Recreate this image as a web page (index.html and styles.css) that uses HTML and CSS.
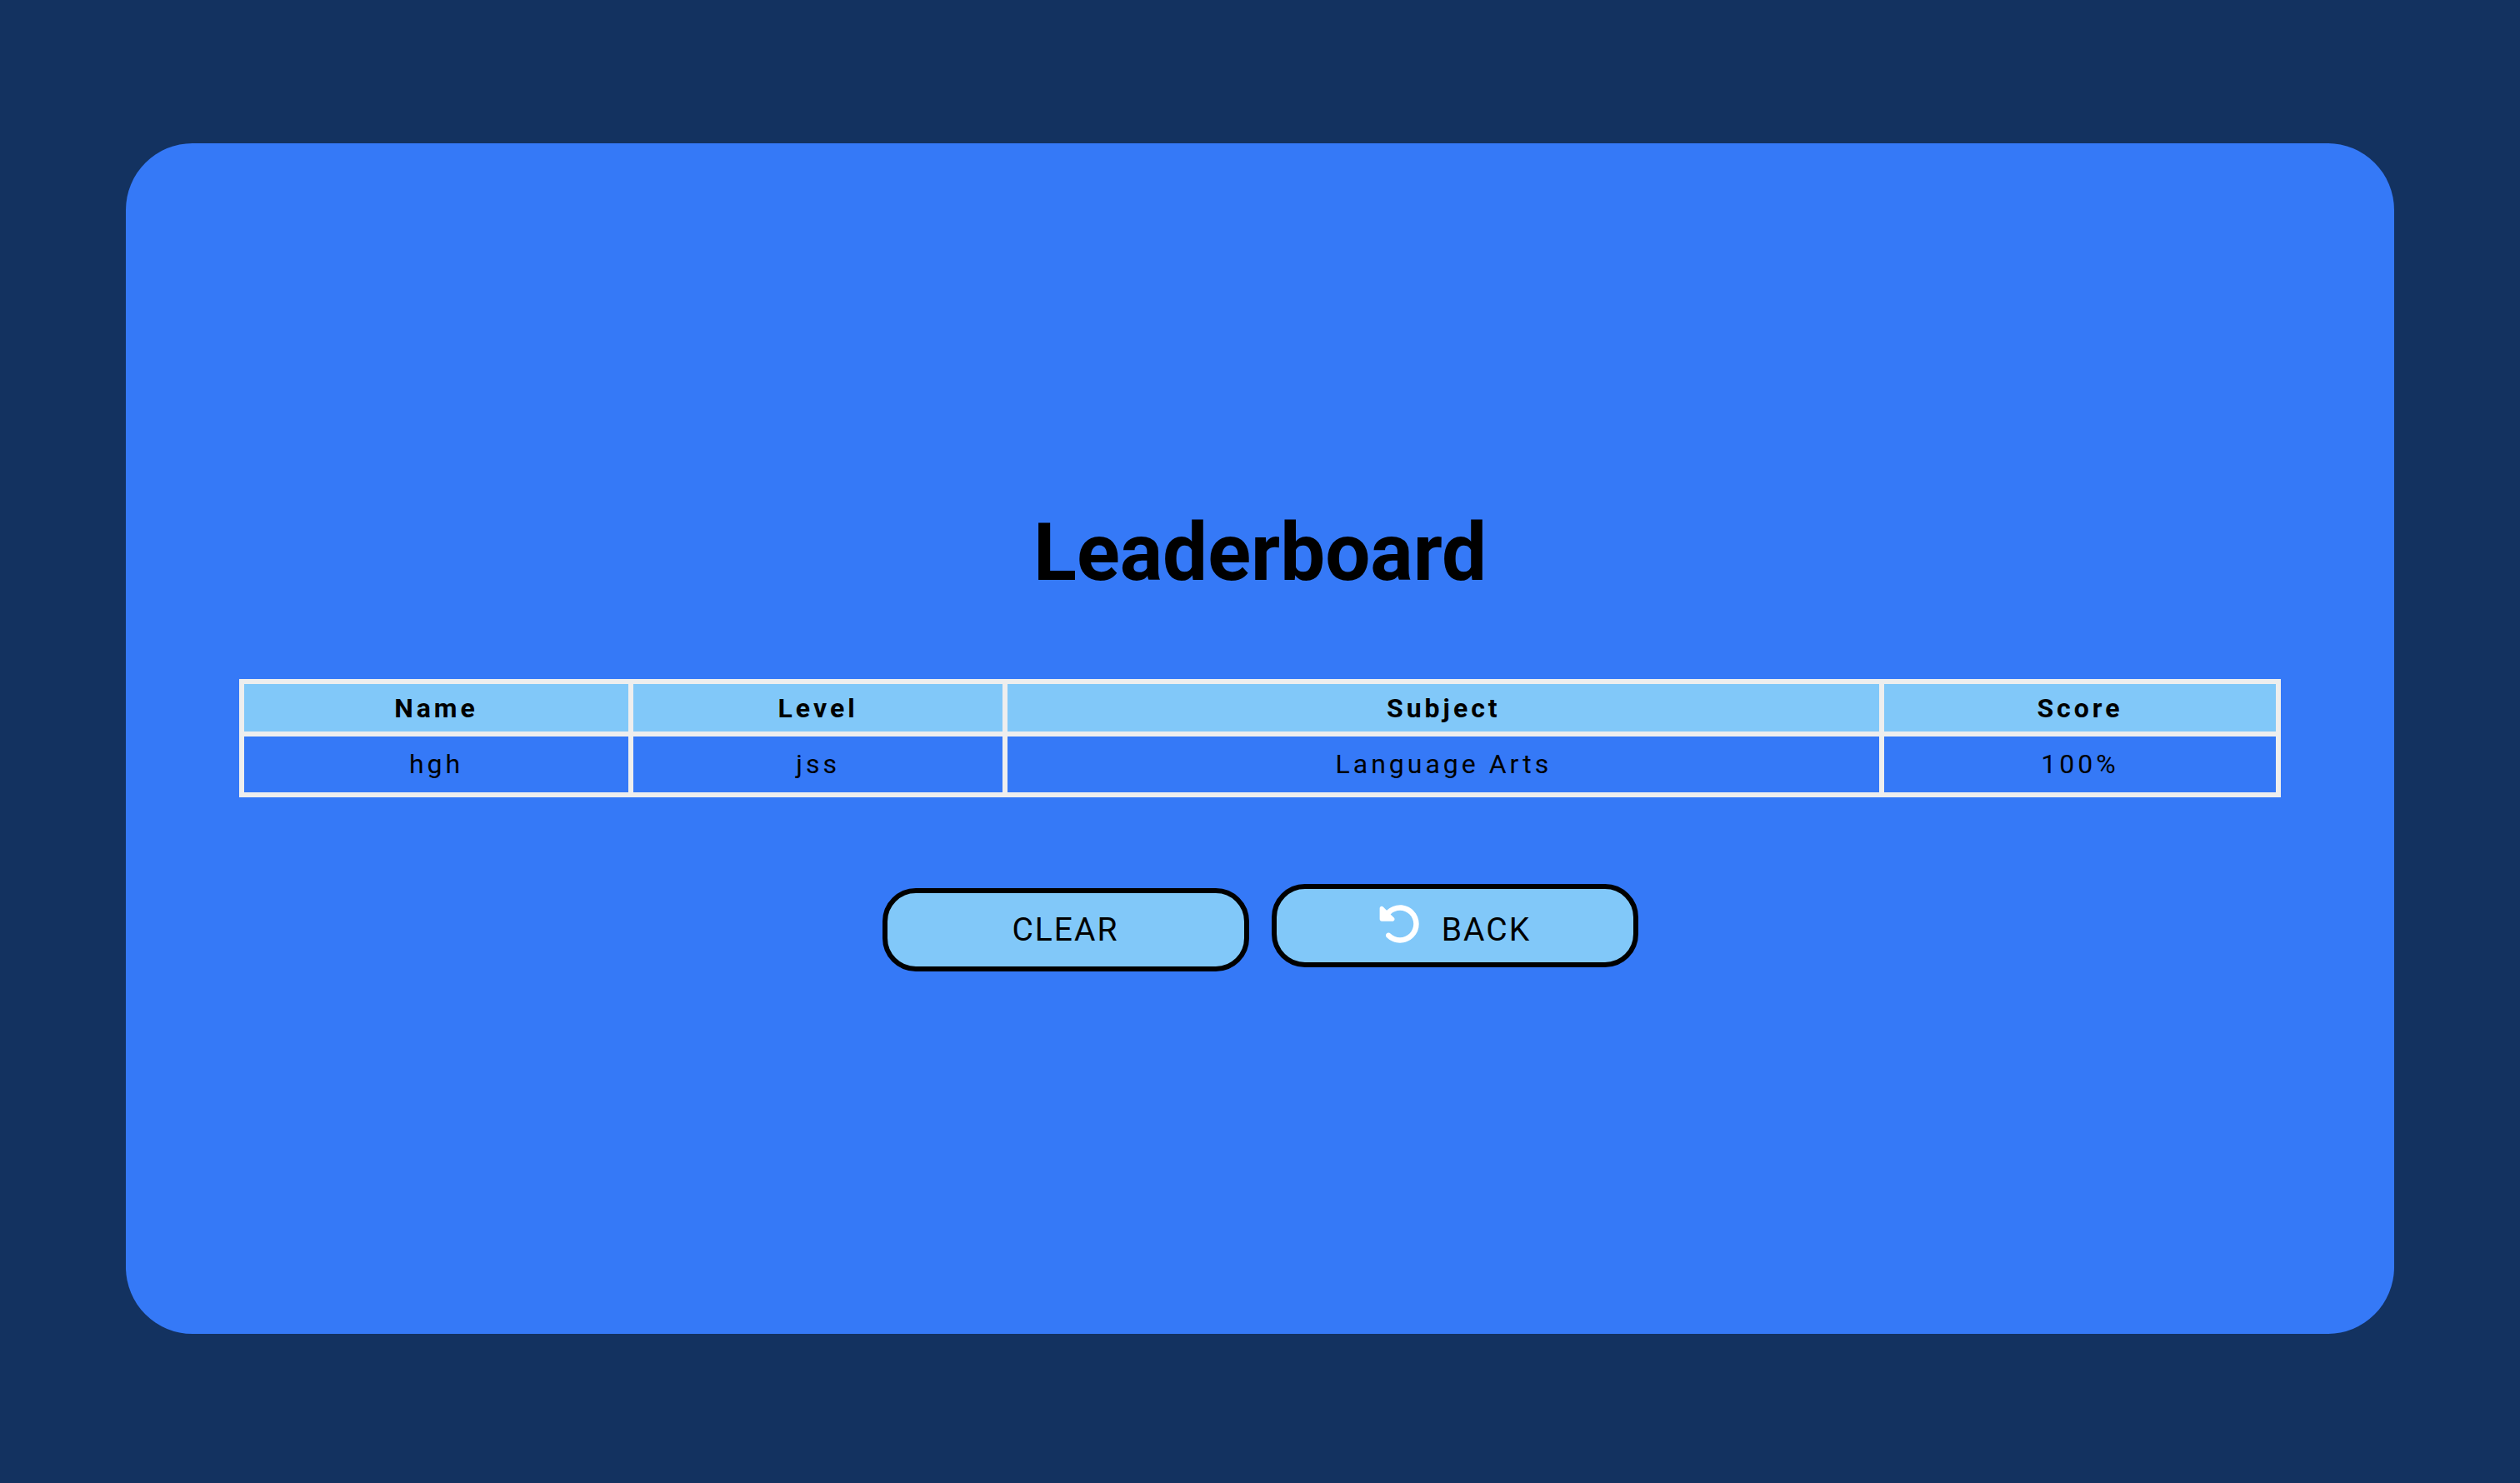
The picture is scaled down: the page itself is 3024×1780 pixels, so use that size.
FILE: index.html
```html
<!DOCTYPE html>
<html lang="en">
<head>
  <meta charset="utf-8">
  <meta name="viewport" content="width=device-width, initial-scale=1">
  <title>Leaderboard</title>
  <link rel="stylesheet" href="styles.css">
</head>
<body>
  <main class="card">
    <h1 class="title">Leaderboard</h1>
    <table class="scores">
      <thead>
        <tr>
          <th scope="col">Name</th>
          <th scope="col">Level</th>
          <th scope="col">Subject</th>
          <th scope="col">Score</th>
        </tr>
      </thead>
      <tbody>
        <tr>
          <td>hgh</td>
          <td>jss</td>
          <td>Language Arts</td>
          <td>100%</td>
        </tr>
      </tbody>
    </table>
    <div class="actions">
      <button class="btn" type="button">CLEAR</button>
      <button class="btn" type="button"><svg class="btn-icon" viewBox="0 0 512 512" aria-hidden="true"><path fill="currentColor" d="M48.5 224H40c-13.3 0-24-10.7-24-24V72c0-9.700 5.800-18.500 14.800-22.200s19.300-1.700 26.200 5.200L98.600 96.600c87.600-86.500 228.700-86.200 315.800 1c87.500 87.500 87.500 229.300 0 316.800s-229.300 87.500-316.800 0c-12.500-12.500-12.500-32.800 0-45.300s32.800-12.500 45.300 0c62.500 62.500 163.800 62.500 226.300 0s62.500-163.800 0-226.300c-62.200-62.200-162.700-62.500-225.300-1L185 183c6.900 6.900 8.900 17.200 5.200 26.200s-12.500 14.800-22.200 14.800H48.500z"/></svg>BACK</button>
    </div>
  </main>
</body>
</html>
```

FILE: styles.css
```css
* {
  box-sizing: border-box;
}

body {
  margin: 0;
  min-height: 100vh;
  padding: 172px 5% 179px;
  display: flex;
  background: #133260;
  color: #000;
  font-family: Roboto, "Liberation Sans", sans-serif;
}

.card {
  flex: 1;
  display: flex;
  flex-direction: column;
  align-items: center;
  justify-content: center;
  border-radius: 80px;
  background: #3579f7;
}

.title {
  margin: 0 0 96px;
  font-size: 96px;
  line-height: 112px;
  font-weight: 700;
}

.scores {
  width: 90%;
  border-collapse: collapse;
  font-size: 32px;
  line-height: 37px;
  letter-spacing: 4px;
  text-align: center;
}

.scores th,
.scores td {
  border: 6px solid #eee;
}

.scores th {
  padding: 11px 10px 9px;
  background: #81c8f9;
  font-weight: 700;
}

.scores td {
  padding: 15px 10px;
}

.actions {
  display: flex;
  align-items: baseline;
  gap: 27px;
  margin-top: 104px;
}

.btn {
  width: 440px;
  height: 100px;
  padding: 0;
  border: 6px solid #000;
  border-radius: 40px;
  background: #81c8f9;
  color: #000;
  font-family: inherit;
  font-size: 39px;
  letter-spacing: 2px;
  cursor: pointer;
}

.btn-icon {
  width: 52px;
  height: 52px;
  margin-right: 24px;
  color: #fff;
  vertical-align: -6px;
}
```
